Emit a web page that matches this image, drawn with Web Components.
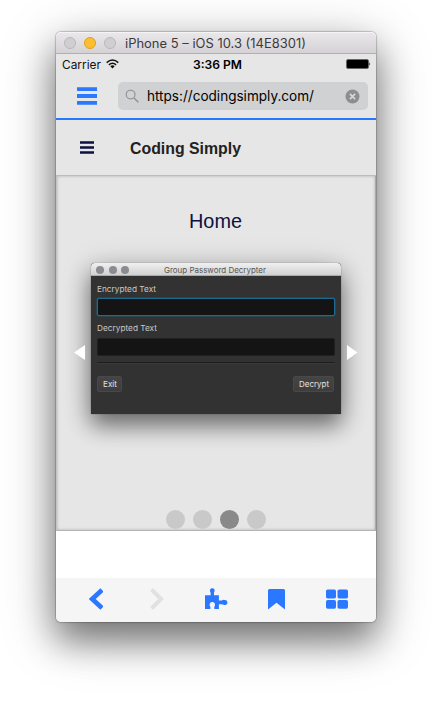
<!DOCTYPE html>
<html lang="en"><head><meta charset="utf-8"><title>Simulator</title>
<style>
html,body{margin:0;height:702px;overflow:hidden;background:#fff}
body{font-family:Inter,"Liberation Sans",sans-serif}
</style></head><body>
<sim-window></sim-window>
<script>
const define=(name,html)=>customElements.define(name,class extends HTMLElement{
  constructor(){super();this.attachShadow({mode:'open'}).innerHTML=html;}
});
class FitText extends HTMLElement{
  connectedCallback(){
    const w=+this.getAttribute('w'),h=this.getAttribute('h')||20,a=this.getAttribute('base')||15;
    const r=this.attachShadow({mode:'open'});
    r.innerHTML=`<style>:host{display:block;width:${w}px;height:${h}px;flex:none}svg{display:block;overflow:visible}text{fill:currentColor;font:inherit}</style><svg width="${w}" height="${h}"><text y="${a}" textLength="${w}" lengthAdjust="spacingAndGlyphs"></text></svg>`;
    r.querySelector('text').textContent=this.getAttribute('label');
  }
}
customElements.define('fit-text',FitText);

define('title-bar',`<style>
:host{display:flex;height:21px;border-bottom:1px solid #b1afb1;background:linear-gradient(#ebe8eb,#d5d2d5);border-radius:5px 5px 0 0;box-shadow:inset 0 1px #f5f4f5;align-items:center;padding-left:8px;box-sizing:content-box;color:#3c3a3c;font-size:12.6px}
i{width:12px;height:12px;border-radius:50%;box-sizing:border-box;background:#d0cfd0;border:1px solid #b9b7b9;margin-right:8px}
i.y{background:#fdbe30;border-color:#dfa023}
fit-text{margin-left:1px}
</style><i></i><i class="y"></i><i></i><fit-text label="iPhone 5 – iOS 10.3 (14E8301)" w="181" h="21" base="15.5"></fit-text>`);

define('status-bar',`<style>
:host{display:grid;grid-template-columns:131px 50px 1fr;height:20px;padding:0 5px 0 6px;color:#111;font-size:11.6px}
div{display:flex;gap:5px}
.m{font-weight:600;color:#000}.b{justify-content:flex-end;padding-top:5px;box-sizing:border-box}
.w{margin-top:5px}
</style><div><fit-text label="Carrier" w="39" base="14.5"></fit-text><svg class="w" width="13" height="10" viewBox="0 0 13 10"><g fill="none" stroke="#111" stroke-width="1.5"><path d="M.7 3.6Q6.500-1.500 12.300 3.600M2.900 5.900Q6.500 2.600 10.100 5.900"/></g><path d="M4.300 7.200Q6.500 5.300 8.700 7.200L6.500 9.500Z" fill="#111"/></svg></div>
<div class="m"><fit-text label="3:36 PM" w="49" base="14.5"></fit-text></div>
<div class="b"><svg width="25" height="10" viewBox="0 0 25 10"><rect x=".5" y=".5" width="22" height="9" rx="1.500" fill="#000" stroke="#666"/><path d="M23.300 3.200Q25 4.900 23.300 6.800Z" fill="#000"/></svg></div>`);

define('address-bar',`<style>
:host{display:flex;height:44px;border-bottom:2px solid #2677ff;padding:0 8px 0 21px;align-items:flex-start}
.f{display:flex;flex:1;height:28px;margin:8px 0 0 21px;border-radius:5px;background:#d0d1d3;color:#000;font-size:14px;align-items:center;padding:0 8px 0 7px}
.menu{margin-top:13px}.f fit-text{margin-left:8px}.x{margin-left:auto}
</style><svg class="menu" width="20" height="18"><path d="M0 2.100H20M0 9H20M0 15.900H20" stroke="#2b79ff" stroke-width="3.800"/></svg>
<div class="f"><svg width="14" height="14" viewBox="0 0 14 14" fill="none" stroke="#8e8f92"><circle cx="5.600" cy="5.600" r="4.400" stroke-width="1.100"/><path d="M9 9L13.300 13.200" stroke-width="1.400"/></svg><fit-text label="https://codingsimply.com/" w="167" h="28" base="18.5"></fit-text>
<svg class="x" width="15" height="15" viewBox="0 0 15 15"><circle cx="7.500" cy="7.500" r="7" fill="#8d8e91"/><path d="M4.900 4.900L10.100 10.100M10.100 4.900L4.900 10.100" stroke="#d9dadc" stroke-width="1.500"/></svg></div>`);

define('site-header',`<style>
:host{display:flex;height:55px;align-items:center;padding-left:24px;color:#222;font:bold 16.500px "Liberation Sans",sans-serif;border-bottom:1px solid #bcbcbc}
fit-text{margin-left:36px}svg{margin-top:-1px}
</style><svg width="14" height="13"><path d="M0 1.500H14M0 6.500H14M0 11.500H14" stroke="#0b1140" stroke-width="2.600"/></svg><fit-text label="Coding Simply" w="111" h="24" base="17.5"></fit-text>`);

define('decrypter-window',`<style>
:host{display:block;width:250px;height:151px;border-radius:4px 4px 0 0;background:#323232;box-shadow:0 12px 22px rgba(0,0,0,.45),0 4px 30px rgba(0,0,0,.2),0 0 1px #444;color:#c8c8c8;font-size:8px}
.t{height:13px;border-bottom:1px solid #aaa;box-sizing:border-box;background:linear-gradient(#f0f0f0,#d1d1d1);border-radius:4px 4px 0 0;display:flex;align-items:center;padding-left:5px;color:#555}
.t i{width:8px;height:8px;border-radius:50%;background:#8c8b91;margin-right:4.500px;margin-top:1px}
.t fit-text{margin-left:30.500px}
.c{padding:4px 6px 0}
.in{height:18px;background:#141414;border-radius:2px;box-sizing:border-box;border:1px solid #202020;margin:3px 0}
.in.f{border-color:#1d6c90;box-shadow:0 0 0 .5px #1d5a74}
hr{border:0;border-top:1px solid #1c1c1c;border-bottom:1px solid #3a3a3a;margin:6px 0 12px}
.b{display:flex;justify-content:space-between;padding-right:1px}
.b span{height:16px;background:linear-gradient(#444,#3d3d3d);border:1px solid #484848;border-radius:2px;box-sizing:border-box;padding:0 4.500px;color:#e2e2e2}
</style><div class="t"><i></i><i></i><i></i><fit-text label="Group Password Decrypter" w="102" h="13" base="10"></fit-text></div>
<div class="c"><fit-text label="Encrypted Text" w="59" h="15" base="11.5"></fit-text><div class="in f"></div>
<fit-text label="Decrypted Text" w="60" h="16" base="11.5"></fit-text><div class="in"></div><hr>
<div class="b"><span><fit-text label="Exit" w="14" h="14" base="10"></fit-text></span><span><fit-text label="Decrypt" w="30" h="14" base="10"></fit-text></span></div></div>`);

define('image-slider',`<style>
:host{display:flex;flex-direction:column;align-items:center;height:355px;box-sizing:border-box;border:1px solid #b5b5b5;border-top:0;border-left-color:#c4c4c4;border-right-color:#aaa;box-shadow:inset 0 0 3px rgba(0,0,0,.25);font-size:20.500px;color:#0b1140;overflow:hidden}
.h{font-family:"Liberation Sans",sans-serif;margin:32px 2px 0 0}
.r{display:flex;gap:6px;margin-top:32px;align-items:flex-start}
.r svg{margin-top:82px;position:relative}
.d{display:flex;gap:8px;margin-top:96px}
.d i{width:19px;height:19px;border-radius:50%;background:#c9c9c9}.d i.a{background:#898989}
</style><fit-text class="h" label="Home" w="53" h="23" base="20"></fit-text>
<div class="r"><svg width="11" height="15"><path d="M11 0V15L0 7.500Z" fill="#fff"/></svg><decrypter-window></decrypter-window><svg width="11" height="15"><path d="M0 0V15L10.500 7.500Z" fill="#fff"/></svg></div>
<div class="d"><i></i><i></i><i class="a"></i><i></i></div>`);

define('tool-bar',`<style>
:host{display:flex;height:44px;background:#f5f5f5;border-radius:0 0 5px 5px;padding-left:33px;color:#2a78ff}
svg{margin-top:10px}
</style>
<svg width="14" height="22"><path d="M13 2L3.200 11L13 20" fill="none" stroke="currentColor" stroke-width="4.800"/></svg>
<svg width="14" height="22" style="margin-left:46.500px"><path d="M1.500 1.500L11 11L1.500 20.500" fill="none" stroke="#e1e1e1" stroke-width="4"/></svg>
<svg width="23" height="22" viewBox="0 0 23 22" style="margin-left:41.500px"><path d="M0 7.200H5.600V4.600C4.200 2.400 5.200.2 7.300.2S10.400 2.400 9 4.600V7.200H13.900V12.600H16.800C18.300 11.200 18.800 12.100 20 12.100C21.600 12.100 22.400 13.100 22.400 14.600S21.600 17.100 20 17.100C18.800 17.100 18.300 16.600 16.800 16.300H13.900V20.900H9.300V18.800C11 16.200 9.500 13.900 7.300 13.900S3.700 16.200 5.400 18.800V20.900H0Z" fill="currentColor"/></svg>
<svg width="17" height="22" style="margin-left:40px"><path d="M1.500 1H15.500Q17 1 17 2.500V21.600L8.500 14.700L0 21.600V2.500Q0 1 1.500 1Z" fill="currentColor"/></svg>
<svg width="22" height="22" fill="currentColor" style="margin-left:41px"><rect y="1.500" width="10" height="9" rx="1.700"/><rect x="11.500" y="1.500" width="10.500" height="9" rx="1.700"/><rect y="12" width="10" height="8.700" rx="1.700"/><rect x="11.500" y="12" width="10.500" height="8.700" rx="1.700"/></svg>`);

define('sim-window',`<style>
:host{display:block;width:320px;height:590px;margin:32px 0 0 56px;background:#e6e6e6;border-radius:5px;box-shadow:0 0 1px 1px rgba(0,0,0,.2),0 19px 34px rgba(0,0,0,.42),0 12px 56px rgba(0,0,0,.28)}
.gap{height:47px;background:#fff}
</style><title-bar></title-bar><status-bar></status-bar><address-bar></address-bar><site-header></site-header><image-slider></image-slider><div class="gap"></div><tool-bar></tool-bar>`);
</script></body></html>
